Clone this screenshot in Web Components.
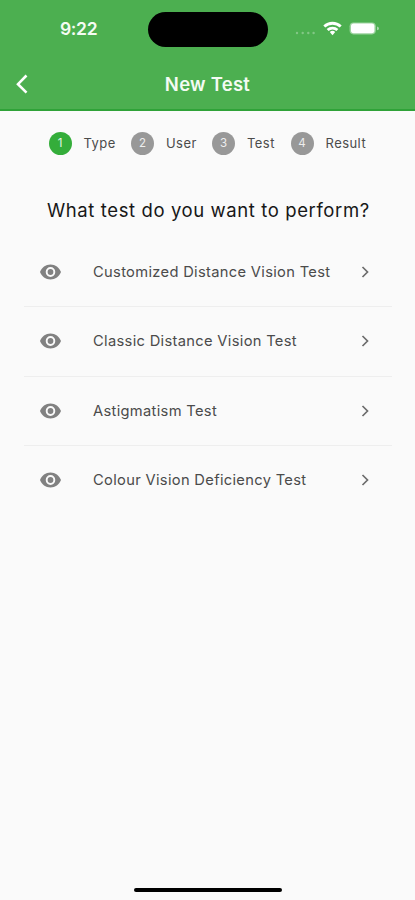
<!DOCTYPE html>
<html lang="en">
<head>
<meta charset="utf-8">
<title>New Test</title>
<style>
body{margin:0;background:#fafafa;font-family:Inter,"Liberation Sans",sans-serif}
</style>
</head>
<body>
<test-app></test-app>
<script>
const define = (name, html, setup) => customElements.define(name, class extends HTMLElement {
  connectedCallback() {
    if (this.shadowRoot) return;
    const t = document.createElement('template');
    t.innerHTML = html;
    this.attachShadow({ mode: 'open' }).append(t.content.cloneNode(true));
    if (setup) setup(this);
  }
});

define('status-bar', `
<style>
:host{display:grid;grid-template-columns:148px 120px 1fr;height:58px;color:#f4fbf3}
time{padding:18px 0 0 60px;font-size:17.5px;line-height:22px;font-weight:600;letter-spacing:-.35px}
.island{margin-top:12px;height:34.5px;border-radius:18px;background:#000}
.icons{display:flex;padding:20px 0 0 27px}
svg{display:block}
</style>
<time>9:22</time><div class="island"></div>
<div class="icons"><svg width="90" height="18" viewBox="0 0 90 18">
<g fill="#fff" opacity=".3"><circle cx="2" cy="13" r="1.2"/><circle cx="7.7" cy="13" r="1.2"/><circle cx="13.3" cy="13" r="1.2"/><circle cx="18.6" cy="13" r="1.2"/></g>
<g fill="none" stroke="#fff" stroke-width="2.8"><path d="M29.3 6.500a12 12 0 0 1 16.400 0"/><path d="M32.600 10a7.100 7.100 0 0 1 9.800 0"/></g>
<path d="M34.800 12a4.200 4.200 0 0 1 5.400 0L37.500 15.200z" fill="#fff"/>
<rect x="54.600" y="2.400" width="26.200" height="12" rx="3.800" fill="#fff" opacity=".45"/>
<rect x="56" y="3.500" width="23.400" height="9.800" rx="2.700" fill="#fff"/>
<path d="M82 6.500q2 .4 2 1.900t-2 1.900z" fill="#fff" opacity=".5"/>
</svg></div>`);

define('nav-bar', `
<style>
:host{display:grid;grid-template-columns:48px 1fr 48px;align-items:center;height:53px;box-sizing:border-box;border-bottom:2px solid #2fa238;color:#f4fbf3}
svg{display:block;margin-left:14px}
h1{margin:1px 0 0;text-align:center;font-size:18.500px;line-height:24px;font-weight:600;letter-spacing:.25px}
</style>
<svg width="16" height="22" viewBox="0 0 16 22"><path d="M12.500 2.500 4 11.200l8.500 8.500" fill="none" stroke="#fff" stroke-width="2.600"/></svg>
<h1><slot></slot></h1>`);

define('step-item', `
<style>
:host{display:flex;align-items:center;height:23px;font-size:13px;color:#4b4b4b;letter-spacing:.45px}
b{width:23px;height:23px;border-radius:50%;background:#989898;color:#eee;font-size:11.500px;line-height:23px;font-weight:400;text-align:center;margin-right:12px;letter-spacing:0}
span{margin-top:-2px}
:host([active]) b{background:#34ad3a;color:#e4f6e4}
</style><b></b><span><slot></slot></span>`, el => el.shadowRoot.querySelector('b').textContent = el.getAttribute('number'));

define('test-row', `
<style>
:host{display:grid;grid-template-columns:69px 1fr 31px;align-items:center;height:69.500px;box-sizing:border-box;border-bottom:1px solid #eee;font-size:14.700px;color:#4b4b4b;letter-spacing:.32px}
:host(:last-of-type){border-color:transparent}
svg{display:block}.eye{margin-left:16px}
</style>
<svg class="eye" width="21" height="16" viewBox="1 4 22 16" preserveAspectRatio="none"><path fill="#818181" d="M12 4.500C7 4.500 2.700 7.600 1 12c1.700 4.400 6 7.500 11 7.500s9.300-3.100 11-7.500c-1.700-4.400-6-7.500-11-7.500zM12 17a5 5 0 1 1 0-10 5 5 0 0 1 0 10zm0-8a3 3 0 1 0 0 6 3 3 0 0 0 0-6z"/></svg>
<span><slot></slot></span>
<svg width="10" height="14" viewBox="0 0 10 14"><path d="m1.500 2 5 5-5 5" fill="none" stroke="#6c6c6c" stroke-width="1.700"/></svg>`);

define('test-app', `
<style>
:host{display:flex;flex-direction:column;height:900px;width:415px;background:#fafafa;overflow:hidden}
header{background:#4caf50}
.steps{display:grid;grid-template-columns:82.500px 81px 78.500px auto;padding:21px 0 0 48.500px}
h2{margin:43px 0 0;padding-left:47px;height:24px;font-size:18.500px;line-height:24px;font-weight:400;color:#171717;letter-spacing:.6px;white-space:nowrap}
.list{margin:15.600px 23px 0 24px}
.home{width:148px;height:4.500px;border-radius:3px;background:#000;margin:auto auto 8px 134px}
</style>
<header><status-bar></status-bar><nav-bar>New Test</nav-bar></header>
<div class="steps"><step-item number="1" active>Type</step-item><step-item number="2">User</step-item><step-item number="3">Test</step-item><step-item number="4">Result</step-item></div>
<h2>What test do you want to perform?</h2>
<div class="list">
<test-row>Customized Distance Vision Test</test-row>
<test-row>Classic Distance Vision Test</test-row>
<test-row>Astigmatism Test</test-row>
<test-row>Colour Vision Deficiency Test</test-row>
</div>
<div class="home"></div>`);
</script>
</body>
</html>
